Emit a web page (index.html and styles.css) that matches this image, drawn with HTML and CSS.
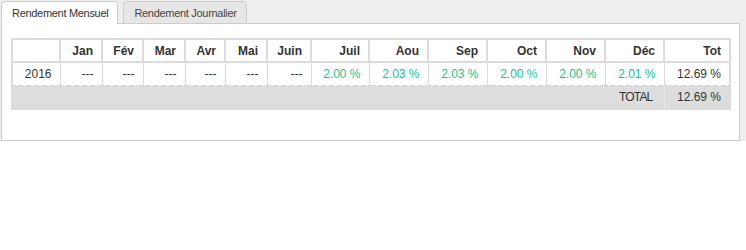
FILE: index.html
```
<!DOCTYPE html>
<html lang="fr">
<head>
<meta charset="utf-8">
<title>Rendement</title>
<link rel="stylesheet" href="styles.css">
</head>
<body>
<div class="widget">
  <ul class="tabs">
    <li class="tab active">Rendement Mensuel</li>
    <li class="tab">Rendement Journalier</li>
  </ul>
  <div class="panel">
    <table class="perf">
      <colgroup>
        <col class="c-year"><col class="c-s1"><col class="c-s2"><col class="c-s1"><col class="c-s3"><col class="c-s1"><col class="c-s4">
        <col class="c-m1"><col class="c-m"><col class="c-m"><col class="c-m"><col class="c-m"><col class="c-m"><col class="c-tot">
      </colgroup>
      <thead>
        <tr>
          <th></th><th>Jan</th><th>Fév</th><th>Mar</th><th>Avr</th><th>Mai</th><th>Juin</th>
          <th>Juil</th><th>Aou</th><th>Sep</th><th>Oct</th><th>Nov</th><th>Déc</th><th>Tot</th>
        </tr>
      </thead>
      <tbody>
        <tr class="data">
          <td>2016</td><td>---</td><td>---</td><td>---</td><td>---</td><td>---</td><td>---</td>
          <td class="pos">2.00 %</td><td class="pos">2.03 %</td><td class="pos">2.03 %</td><td class="pos">2.00 %</td><td class="pos">2.00 %</td><td class="pos">2.01 %</td><td>12.69 %</td>
        </tr>
        <tr class="total">
          <td colspan="13" class="total-label">TOTAL</td><td class="total-val">12.69 %</td>
        </tr>
      </tbody>
    </table>
  </div>
</div>
</body>
</html>
```
FILE: styles.css
```
html, body {
  margin: 0;
  padding: 0;
  background: #fff;
}
body {
  font-family: "Liberation Sans", Arial, sans-serif;
  font-size: 12px;
  color: #333;
}
.widget {
  background: #eeeeee;
  padding: 0 6px 0 1px;
}
.tabs {
  list-style: none;
  margin: 0 0 -1px 0;
  padding: 1px 0 0 0;
  display: flex;
  gap: 5px;
}
.tab {
  position: relative;
  box-sizing: border-box;
  height: 23px;
  padding: 4px 9px 0 10px;
  border: 1px solid #ccc;
  border-radius: 4px 4px 0 0;
  background: #e6e6e6;
  color: #444;
  font-size: 11px;
  letter-spacing: -0.3px;
  line-height: 15px;
}
.tab.active {
  background: #fff;
  border-bottom-color: #fff;
  color: #333;
}
.panel {
  box-sizing: border-box;
  height: 118px;
  background: #fff;
  border: 1px solid #ccc;
  padding: 14px 9px 0 9px;
}
.perf {
  width: 100%;
  table-layout: fixed;
  border-collapse: collapse;
  border: 2px solid #dcdcdc;
}
.c-year { width: 48px; }
.c-s1 { width: 42px; }
.c-s2 { width: 41px; }
.c-s3 { width: 40px; }
.c-s4 { width: 44px; }
.c-m1 { width: 58px; }
.c-m { width: 59px; }
.c-tot { width: 66px; }
.perf th {
  height: 19px;
  padding: 1px 8px 1px 4px;
  border: 2px solid #dcdcdc;
  text-align: right;
  font-weight: bold;
  color: #333;
}
.perf td {
  padding: 0 8px 0 4px;
  text-align: right;
  white-space: nowrap;
}
.data td {
  height: 22px;
  border-left: 1px solid #dcdcdc;
  border-right: 1px solid #dcdcdc;
  border-bottom: 1px dotted #c8c8c8;
}
.pos {
  color: #18c28c;
}
.total td {
  height: 22px;
  background: #dddddd;
}
.total .total-label {
  padding-right: 11px;
  letter-spacing: -0.8px;
}
.total .total-val {
  border-left: 1px solid #e8e8e8;
}
```
